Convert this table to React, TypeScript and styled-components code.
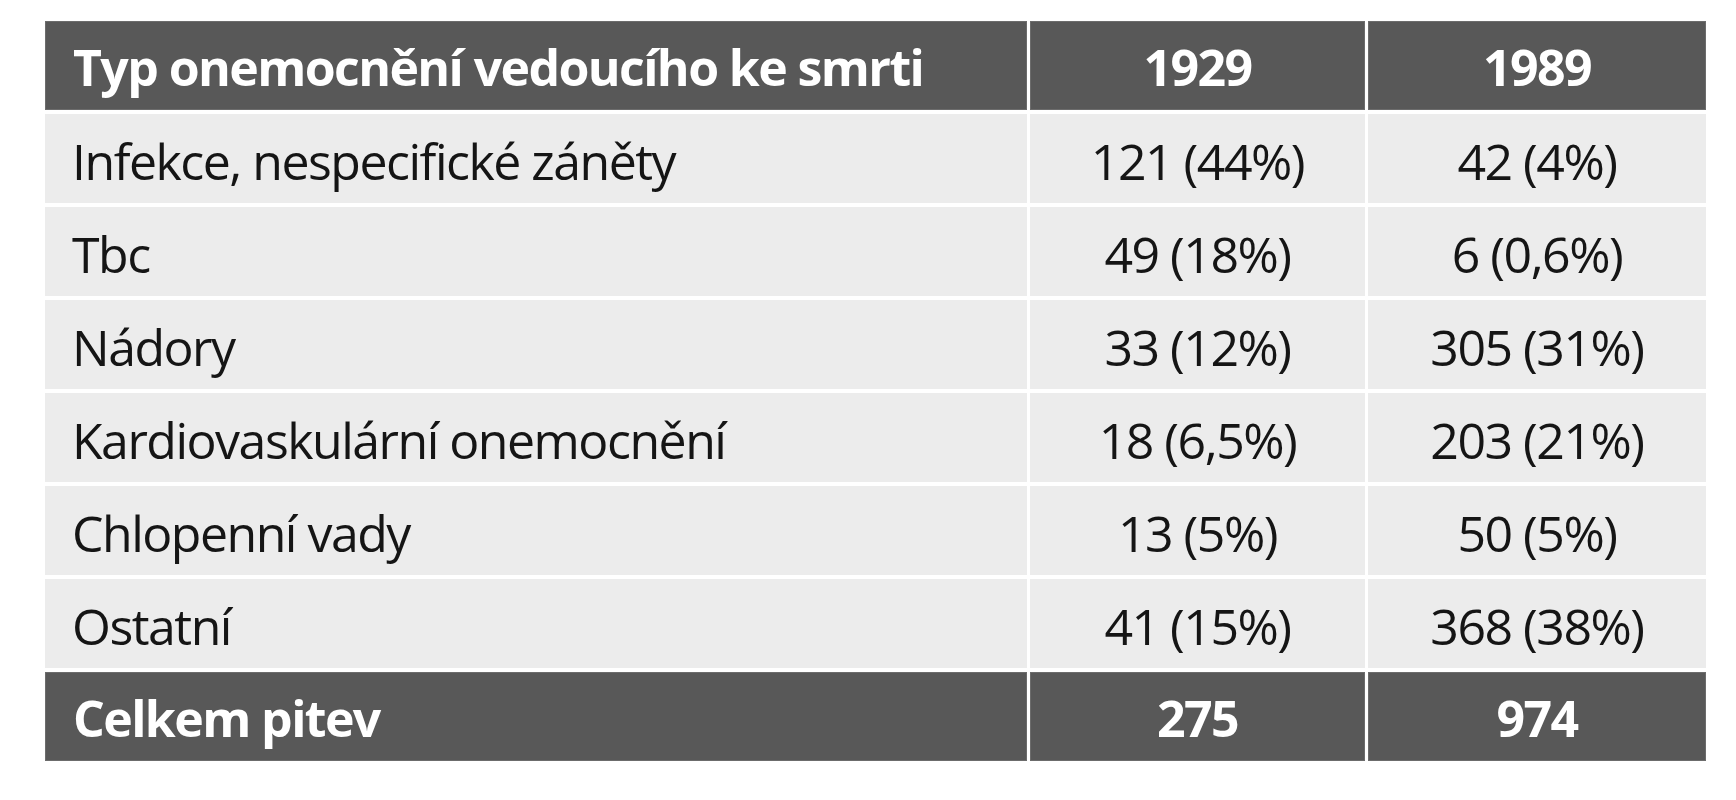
import React from 'react';
import styled, { createGlobalStyle } from 'styled-components';

const GlobalStyle = createGlobalStyle`
    html, body {
        margin: 0;
        padding: 0;
        background: #ffffff;
    }
`;

const Page = styled.div`
    padding: 21px 0 0 45px;
    font-family: 'Open Sans', 'Noto Sans', sans-serif;
`;

const Table = styled.div`
    display: grid;
    grid-template-columns: 982px 335px 338px;
    grid-auto-rows: 89px;
    column-gap: 3px;
    row-gap: 4px;
    width: 1661px;
`;

const Cell = styled.div<{ $dark?: boolean; $center?: boolean }>`
    box-sizing: border-box;
    padding: ${({ $dark }) => ($dark ? '19px 27px 0 27px' : '21px 27px 0 27px')};
    font-size: 50px;
    line-height: 52px;
    font-weight: ${({ $dark }) => ($dark ? 700 : 400)};
    letter-spacing: ${({ $dark }) => ($dark ? '-1.6px' : '-1.5px')};
    text-align: ${({ $center }) => ($center ? 'center' : 'left')};
    white-space: nowrap;
    color: ${({ $dark }) => ($dark ? '#ffffff' : '#151515')};
    background: ${({ $dark }) => ($dark ? '#585858' : '#ececec')};
    border: ${({ $dark }) => ($dark ? '1px solid #6c6c6c' : 'none')};
`;

const rows: [string, string, string][] = [
    ['Infekce, nespecifické záněty', '121 (44%)', '42 (4%)'],
    ['Tbc', '49 (18%)', '6 (0,6%)'],
    ['Nádory', '33 (12%)', '305 (31%)'],
    ['Kardiovaskulární onemocnění', '18 (6,5%)', '203 (21%)'],
    ['Chlopenní vady', '13 (5%)', '50 (5%)'],
    ['Ostatní', '41 (15%)', '368 (38%)'],
];

const App: React.FC = () => {
    return (
        <>
            <GlobalStyle />
            <Page>
                <Table>
                    <Cell $dark>Typ onemocnění vedoucího ke smrti</Cell>
                    <Cell $dark $center>1929</Cell>
                    <Cell $dark $center>1989</Cell>
                    {rows.map(([label, a, b]) => (
                        <React.Fragment key={label}>
                            <Cell>{label}</Cell>
                            <Cell $center>{a}</Cell>
                            <Cell $center>{b}</Cell>
                        </React.Fragment>
                    ))}
                    <Cell $dark>Celkem pitev</Cell>
                    <Cell $dark $center>275</Cell>
                    <Cell $dark $center>974</Cell>
                </Table>
            </Page>
        </>
    );
};

export default App;
